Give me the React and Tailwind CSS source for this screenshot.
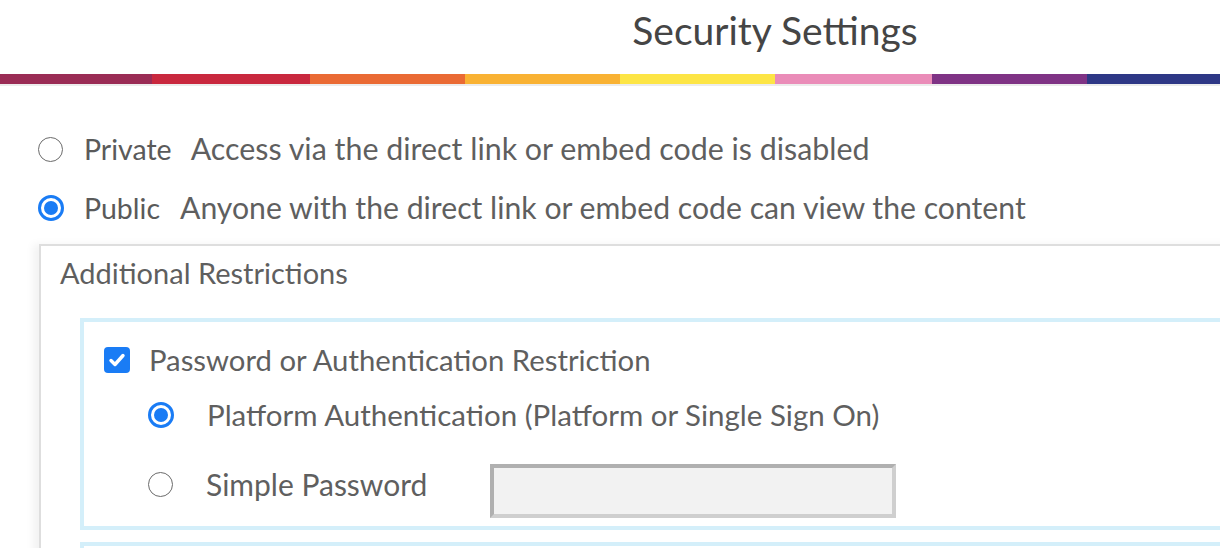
import React, { useState } from 'react';

const STRIPE = [
  { w: 'w-[152px]', c: 'bg-[#9a2c55]' },
  { w: 'w-[158px]', c: 'bg-[#c9283e]' },
  { w: 'w-[155px]', c: 'bg-[#ea6a34]' },
  { w: 'w-[155px]', c: 'bg-[#f9b233]' },
  { w: 'w-[155px]', c: 'bg-[#fde545]' },
  { w: 'w-[157px]', c: 'bg-[#ea8cb8]' },
  { w: 'w-[155px]', c: 'bg-[#7f3385]' },
  { w: 'flex-1', c: 'bg-[#2e3886]' },
];

// round radio, drawn by hand so it looks like the screenshot
function Radio({ checked, onClick }) {
  if (checked) {
    return (
      <span onClick={onClick} className="w-[26px] h-[26px] rounded-full border-[3px] border-[#1a7cf5] flex items-center justify-center shrink-0 cursor-pointer">
        <span className="w-[14px] h-[14px] rounded-full bg-[#1a7cf5]" />
      </span>
    );
  }
  return (
    <span onClick={onClick} className="w-[25px] h-[25px] rounded-full border-[1.5px] border-[#6b6b6b] bg-white shrink-0 cursor-pointer" />
  );
}

export default function App() {
  const [access, setAccess] = useState('public');
  const [restrict, setRestrict] = useState(true);
  const [auth, setAuth] = useState('platform');

  return (
    <div className="w-[1220px] h-[548px] overflow-hidden bg-white text-[#5f5f5f]" style={{ fontFamily: 'Lato, "Open Sans", sans-serif' }}>
      {/* header */}
      <div className="w-[1550px] h-[74px] flex items-center justify-center pb-[14px]">
        <h1 className="text-[39px] leading-none text-[#454545]">Security Settings</h1>
      </div>
      <div className="flex h-[10px]">
        {STRIPE.map((s, i) => (
          <div key={i} className={`${s.w} ${s.c} h-full`} />
        ))}
      </div>
      <div className="h-[2px] bg-[#ececec]" />

      {/* access level */}
      <div className="pl-[38px] pt-[43px]">
        <div className="flex items-center h-[40px]">
          <Radio checked={access === 'private'} onClick={() => setAccess('private')} />
          <span className="ml-[21px] text-[28.5px] text-[#5a5a5a]">Private</span>
          <span className="ml-[19px] text-[30.4px]">Access via the direct link or embed code is disabled</span>
        </div>
        <div className="flex items-center h-[40px] mt-[19px]">
          <Radio checked={access === 'public'} onClick={() => setAccess('public')} />
          <span className="ml-[20px] text-[28.5px] text-[#5a5a5a]">Public</span>
          <span className="ml-[20px] text-[30.2px]">Anyone with the direct link or embed code can view the content</span>
        </div>
      </div>

      {/* additional restrictions */}
      <div className="ml-[39px] mt-[16px] w-[1300px] border-t-2 border-l-2 border-[#dedede] shadow-[-6px_0_8px_rgba(0,0,0,0.05)]">
        <div className="pl-[19px] pt-[9px] h-[45px] flex items-center text-[29px]">Additional Restrictions</div>
        <div className="ml-[39px] mt-[27px] border-4 border-r-0 border-[#d4effa] pl-[20px] pt-[20px] pb-[8px]">
          <label className="flex items-center h-[36px] text-[29.3px] cursor-pointer">
            <span
              onClick={() => setRestrict(!restrict)}
              className={`w-[26px] h-[26px] rounded-[4px] flex items-center justify-center shrink-0 ${restrict ? 'bg-[#1a7cf5]' : 'border-2 border-[#888] bg-white'}`}
            >
              {restrict && (
                <svg width="20" height="20" viewBox="0 0 20 20" fill="none">
                  <path d="M4 10.5 L8 14.5 L16 5.5" stroke="white" strokeWidth="3.4" strokeLinecap="round" strokeLinejoin="round" />
                </svg>
              )}
            </span>
            <span className="ml-[19px]">Password or Authentication Restriction</span>
          </label>

          <div className="flex items-center h-[36px] mt-[19px] ml-[44px] text-[29.5px]">
            <Radio checked={auth === 'platform'} onClick={() => setAuth('platform')} />
            <span className="ml-[33px]">Platform Authentication (Platform or Single Sign On)</span>
          </div>

          <div className="flex items-start mt-[31px] ml-[44px] text-[30px]">
            <div className="flex items-center h-[40px] w-[342px]">
              <Radio checked={auth === 'simple'} onClick={() => setAuth('simple')} />
              <span className="ml-[33px]">Simple Password</span>
            </div>
            <input
              type="password"
              disabled={auth !== 'simple'}
              className="w-[406px] h-[54px] bg-[#f2f2f2] border-4 border-t-[#b0b0b0] border-l-[#b0b0b0] border-b-[#cfcfcf] border-r-[#cfcfcf] outline-none px-2 text-[20px]"
            />
          </div>
        </div>
        <div className="ml-[39px] mt-[12px] border-t-4 border-l-4 border-[#d4effa] h-[40px]" />
      </div>
    </div>
  );
}
